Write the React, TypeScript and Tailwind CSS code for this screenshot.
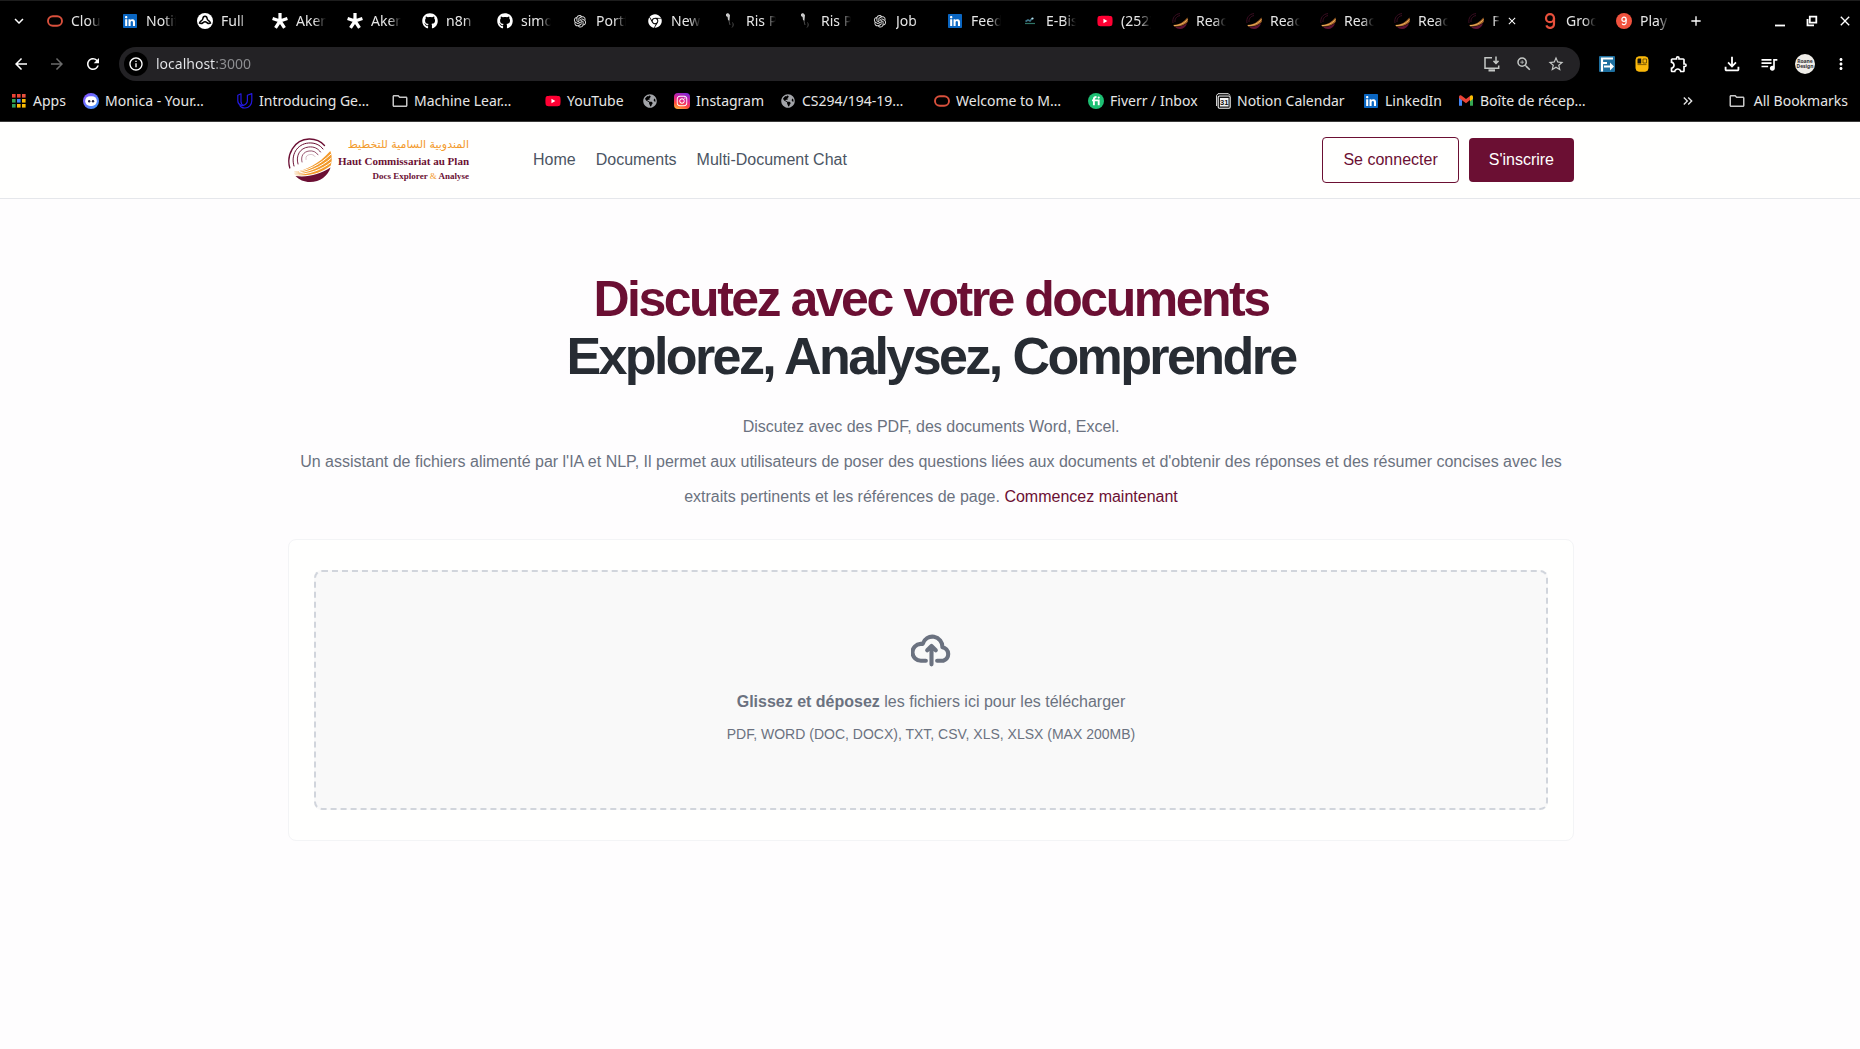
import type { ReactNode } from "react";
import { FaGithub, FaChrome, FaYoutube, FaLinkedin, FaInstagram, FaGlobeAmericas } from "react-icons/fa";
import { AiOutlineOpenAI } from "react-icons/ai";
import {
  MdAdd,
  MdArrowBack,
  MdArrowForward,
  MdClose,
  MdInfoOutline,
  MdKeyboardArrowDown,
  MdMoreVert,
  MdOutlineExtension,
  MdOutlineFileDownload,
  MdOutlineFolder,
  MdQueueMusic,
  MdRefresh,
  MdStarBorder,
  MdZoomIn,
  MdKeyboardDoubleArrowRight,
} from "react-icons/md";

/* ---------- Small brand drawings ---------- */

const Oracle = () => (
  <svg viewBox="0 0 16 16" className="size-4">
    <rect x="1" y="3.2" width="14" height="9.6" rx="4.8" fill="none" stroke="#d9503c" strokeWidth="1.9" />
  </svg>
);

const LinkedIn = () => (
  <span className="relative block size-4">
    <span className="absolute inset-[2px] bg-white" />
    <FaLinkedin className="relative size-4 text-[#0a66c2]" />
  </span>
);

const FullStack = () => (
  <svg viewBox="0 0 16 16" className="size-4">
    <circle cx="8" cy="8" r="8" fill="#fff" />
    <path
      d="M8 3.200c1.200 0 2 1 2.100 2.300.1 1 .6 1.600 1.500 2.200 1 .7 1.700 1.400 1.900 2.500-1.300.7-2.600.3-3.600-.6-.6-.5-1.200-.8-1.900-.8s-1.300.3-1.900.8c-1 .9-2.300 1.300-3.600.6.2-1.100.9-1.800 1.900-2.500.9-.6 1.400-1.200 1.500-2.200C6 4.200 6.800 3.200 8 3.200z"
      fill="none"
      stroke="#000"
      strokeWidth="1.500"
    />
  </svg>
);

const Asterisk = () => (
  <svg viewBox="0 0 16 16" className="size-4" stroke="#fff" strokeWidth="3.2">
    <path d="M8 8V0M8 8L.6 5.600M8 8L15.400 5.600M8 8L3.500 14.800M8 8L12.500 14.800" />
  </svg>
);

const Ris = () => (
  <svg viewBox="0 0 16 16" className="size-4">
    <path d="M4 1l2-1 2 2-.6 6L6 7 5.600 4 4 3z" fill="#c9c9c9" />
    <path d="M7 8l1 4M10.500 9.500c1 1.500 1 3.500-.5 5" stroke="#4b4b4b" fill="none" strokeWidth="1" />
  </svg>
);

const Ebis = () => (
  <svg viewBox="0 0 16 16" className="size-4">
    <path d="M3.500 8.500l2.500-1.500 2 1 2-2.500" stroke="#3f7488" strokeWidth="1.600" fill="none" />
    <path d="M3 10.500h10" stroke="#2f7466" strokeWidth="1.200" />
    <circle cx="10.500" cy="5.500" r="1.100" fill="#b5e2f0" />
  </svg>
);

const ReactDocs = () => (
  <svg viewBox="0 0 16 16" className="size-4">
    <path d="M1 10C0 5 3 1 8 .6M3 9C2.600 6 4.600 3 8 2.600" stroke="#3b0d22" strokeWidth="1" fill="none" />
    <path d="M1 12C7 12 12 9 15.400 4.500c.5 1.500.6 3 .3 4.500C12 12.500 7 14 2.500 13.500z" fill="#a9672a" />
    <path d="M2 12.600C8 12.600 12.500 10 15.500 6.500" stroke="#f0b45f" strokeWidth=".9" fill="none" />
    <path d="M3 13.800C8 14.400 12 12.500 15.200 10C14 14 11 16 8 16c-2 0-3.800-.8-5-2.200z" fill="#5b1233" />
  </svg>
);

const Groq = () => (
  <svg viewBox="0 0 16 16" className="size-4" fill="none" stroke="#e8503c" strokeWidth="2.200">
    <circle cx="8" cy="5.200" r="4" />
    <path d="M12 5v5.800a4 4 0 0 1-7.700 1.600" />
  </svg>
);

const Playground = () => (
  <svg viewBox="0 0 16 16" className="size-4">
    <circle cx="8" cy="8" r="8" fill="#f0523e" />
    <circle cx="8" cy="6.300" r="2.100" fill="none" stroke="#fff" strokeWidth="1.200" />
    <path d="M10.100 6.300v3.200a2.100 2.100 0 0 1-4 .9" fill="none" stroke="#fff" strokeWidth="1.200" />
  </svg>
);

const appColors = ["#ea4335", "#ea4335", "#e8513f", "#34a853", "#4285f4", "#fbbc04", "#2f9e5b", "#fbbc04", "#fbbc04"];
const AppsGrid = () => (
  <svg viewBox="0 0 14 14" className="size-[14px]">
    {appColors.map((c, i) => (
      <rect key={i} x={(i % 3) * 5} y={Math.floor(i / 3) * 5} width="3.600" height="3.600" fill={c} />
    ))}
  </svg>
);

const Monica = () => (
  <svg viewBox="0 0 16 16" className="size-4">
    <defs>
      <linearGradient id="monica" x1="0" x2="1" y1="0" y2="1">
        <stop offset="0" stopColor="#8b4dff" />
        <stop offset="1" stopColor="#3aa0ff" />
      </linearGradient>
    </defs>
    <circle cx="8" cy="8" r="8" fill="url(#monica)" />
    <rect x="2.200" y="3.200" width="11.600" height="9.800" rx="4.800" fill="#fff" />
    <circle cx="6.200" cy="8.300" r="1.200" fill="#1c1c3a" />
    <circle cx="10" cy="8.300" r="1.200" fill="#1c1c3a" />
  </svg>
);

const Udacity = () => (
  <svg viewBox="0 0 16 16" className="size-4" fill="none" stroke="#2418e0" strokeWidth="1.200" strokeLinejoin="round">
    <path d="M.8 2.200L4 .8v7.600c0 2 1 3.200 2.600 3.800-1 .6-1.800.5-2.600.2C2 11.600.8 10 .8 7.800z" />
    <path d="M6.600 12.200c2-.6 3.800-2.200 3.800-5V2.200l4.400-1.600v7.200c0 4-3 7-6.800 7.200-2.600.1-4.400-.8-5.400-2.800" />
  </svg>
);

const Instagram = () => (
  <span className="flex size-4 items-center justify-center rounded bg-[linear-gradient(200deg,#7a2be0_5%,#e1228b_45%,#ff4b3a_70%,#ffc83a_100%)]">
    <FaInstagram className="size-3 text-white" />
  </span>
);

const Fiverr = () => (
  <svg viewBox="0 0 16 16" className="size-4">
    <circle cx="8" cy="8" r="8" fill="#1dbf73" />
    <path d="M4 7.400h6.700v4.800M5.900 12.200V6c0-1.400.8-2 2.600-2" stroke="#fff" strokeWidth="1.900" fill="none" />
    <circle cx="10.700" cy="4.600" r="1.100" fill="#fff" />
  </svg>
);

const Notion = () => (
  <svg viewBox="0 0 16 16" className="size-4">
    <path d="M1.600 13V2.400L3 .7h10.400l1.600 1.700" stroke="#e6e6e6" strokeWidth="1" fill="none" />
    <rect x="3.200" y="3" width="12" height="12.300" rx="1.200" fill="#111" stroke="#f1f1f1" strokeWidth="1.100" />
    <rect x="5" y="5" width="8.500" height="8.500" fill="#f5f5f5" />
    <text x="9.200" y="12" textAnchor="middle" fontSize="7.500" fontWeight="700" fontFamily="Liberation Sans, sans-serif" fill="#111">
      31
    </text>
  </svg>
);

const Gmail = () => (
  <svg viewBox="0 0 16 16" className="size-4">
    <path d="M1 3.500v9.200h3V7z" fill="#4285f4" />
    <path d="M15 3.500v9.200h-3V7z" fill="#34a853" />
    <path d="M12 5v3.200l3-2.300V4c0-1.700-1.800-2.200-3-1z" fill="#fbbc04" />
    <path d="M1 4c0-1.700 1.800-2.200 3-1l4 3.100L12 3v4L8 10.200 1 5z" fill="#ea4335" />
  </svg>
);

const YouTube = () => (
  <span className="relative block size-4">
    <span className="absolute inset-[5px] bg-white" />
    <FaYoutube className="relative size-4 text-[#ff0033]" />
  </span>
);

const Globe = () => <FaGlobeAmericas className="size-[14px] text-[#a2a4a8]" />;

/* ---------- Browser chrome ---------- */

type Tab = { label: string; icon: ReactNode; active?: boolean; narrow?: boolean };

const tabs: Tab[] = [
  { label: "Cloud", icon: <Oracle /> },
  { label: "Notific", icon: <LinkedIn /> },
  { label: "Full", icon: <FullStack /> },
  { label: "Aken", icon: <Asterisk /> },
  { label: "Aken", icon: <Asterisk /> },
  { label: "n8n", icon: <FaGithub className="size-4 text-white" /> },
  { label: "simo", icon: <FaGithub className="size-4 text-white" /> },
  { label: "Portf", icon: <AiOutlineOpenAI className="size-4 text-[#d8d8d8]" /> },
  { label: "New", icon: <FaChrome className="size-[14px] text-white" /> },
  { label: "Ris P", icon: <Ris /> },
  { label: "Ris P", icon: <Ris /> },
  { label: "Job", icon: <AiOutlineOpenAI className="size-4 text-[#d8d8d8]" /> },
  { label: "Feed", icon: <LinkedIn /> },
  { label: "E-Bis", icon: <Ebis /> },
  { label: "(252)", icon: <YouTube /> },
  { label: "React", icon: <ReactDocs />, narrow: true },
  { label: "React", icon: <ReactDocs />, narrow: true },
  { label: "React", icon: <ReactDocs />, narrow: true },
  { label: "React", icon: <ReactDocs />, narrow: true },
  { label: "F", icon: <ReactDocs />, narrow: true, active: true },
  { label: "Groq", icon: <Groq />, narrow: true },
  { label: "Play", icon: <Playground />, narrow: true },
];

const bookmarks: { label: string; icon: ReactNode; width: string }[] = [
  { label: "Apps", icon: <AppsGrid />, width: "w-[72px]" },
  { label: "Monica - Your…", icon: <Monica />, width: "w-[154px]" },
  { label: "Introducing Ge…", icon: <Udacity />, width: "w-[155px]" },
  { label: "Machine Lear…", icon: <MdOutlineFolder className="size-[18px] shrink-0 text-[#c7c7c7]" />, width: "w-[153px]" },
  { label: "YouTube", icon: <YouTube />, width: "w-[97px]" },
  { label: "", icon: <Globe />, width: "w-8" },
  { label: "Instagram", icon: <Instagram />, width: "w-[106px]" },
  { label: "CS294/194-19…", icon: <Globe />, width: "w-[154px]" },
  { label: "Welcome to M…", icon: <Oracle />, width: "w-[154px]" },
  { label: "Fiverr / Inbox", icon: <Fiverr />, width: "w-[127px]" },
  { label: "Notion Calendar", icon: <Notion />, width: "w-[148px]" },
  { label: "LinkedIn", icon: <LinkedIn />, width: "w-[95px]" },
  { label: "Boîte de récep…", icon: <Gmail />, width: "w-[150px]" },
];

function TabStrip() {
  return (
    <div className="flex h-[42px] items-center pb-0.5">
      <button aria-label="Search tabs" className="flex w-[47px] shrink-0 pl-[10px]">
        <MdKeyboardArrowDown className="size-[18px] text-white" />
      </button>
      <div role="tablist" className="flex min-w-0 items-center">
        {tabs.map((t, i) => (
          <div key={i} className={t.narrow ? "flex w-[74px] min-w-0 items-center" : "flex w-[75px] min-w-0 items-center"}>
            <button role="tab" aria-selected={!!t.active} className="flex min-w-0 items-center gap-2">
              <span className="flex w-4 shrink-0 justify-center">{t.icon}</span>
              <span
                className={
                  t.active
                    ? "w-2 overflow-hidden whitespace-nowrap mask-r-from-20% mask-r-to-100%"
                    : "w-[30px] overflow-hidden text-left whitespace-nowrap mask-r-from-60% mask-r-to-100%"
                }
              >
                {t.label}
              </span>
            </button>
            {t.active && (
              <button aria-label="Close tab" className="ml-1.5">
                <MdClose className="size-3 text-white" />
              </button>
            )}
          </div>
        ))}
      </div>
      <button aria-label="New tab" className="-ml-0.5 shrink-0">
        <MdAdd className="size-4 text-white" />
      </button>
      <div className="ml-auto flex items-center gap-[18px] pr-[7px] text-white">
        <button aria-label="Minimize">
          <svg viewBox="0 0 14 14" className="size-[14px]">
            <path d="M2 11.500h10" stroke="currentColor" strokeWidth="1.800" />
          </svg>
        </button>
        <button aria-label="Restore">
          <svg viewBox="0 0 14 14" className="size-[14px]" fill="none" stroke="currentColor" strokeWidth="1.800">
            <path d="M4.800 2.700h6.500v6H4.800zM2.500 5v6.300H9" />
          </svg>
        </button>
        <button aria-label="Close">
          <MdClose className="size-4" />
        </button>
      </div>
    </div>
  );
}

function Toolbar() {
  return (
    <div className="flex h-[42px] items-center">
      <div className="flex w-[119px] shrink-0 items-center gap-[18px] pl-3 text-white">
        <button aria-label="Back">
          <MdArrowBack className="size-[18px]" />
        </button>
        <button aria-label="Forward" className="text-[#6b6b6b]">
          <MdArrowForward className="size-[18px]" />
        </button>
        <button aria-label="Reload">
          <MdRefresh className="size-[18px]" />
        </button>
      </div>
      <div className="flex h-[34px] min-w-0 flex-1 items-center rounded-full bg-[#232225] pr-[15px] pl-[5px] text-[#c4c7c5]">
        <button aria-label="Site information" className="flex size-6 shrink-0 items-center justify-center rounded-full bg-black text-white">
          <MdInfoOutline className="size-4" />
        </button>
        <input
          aria-label="Address"
          defaultValue="localhost:3000"
          className="ml-2 min-w-0 flex-1 bg-[linear-gradient(90deg,#e8eaed_60px,#8f9093_60px)] bg-clip-text text-transparent caret-white outline-none"
        />
        <div className="flex items-center gap-[14px]">
          <button aria-label="Install app">
            <svg viewBox="0 0 18 16" className="h-4 w-[18px]" fill="none" stroke="currentColor" strokeWidth="1.500">
              <path d="M9 1.700H2v10.500h13.700V9.500M13 .5v6.700M10.500 4.900L13 7.400l2.500-2.500" />
              <path d="M5.500 14.400h6.500" strokeWidth="2.200" />
            </svg>
          </button>
          <button aria-label="Zoom">
            <MdZoomIn className="size-[18px]" />
          </button>
          <button aria-label="Bookmark this page">
            <MdStarBorder className="size-[18px]" />
          </button>
        </div>
      </div>
      <div className="flex shrink-0 items-center pr-[10px] pl-[19px] text-white">
        <button aria-label="Share extension">
          <svg viewBox="0 0 16 16" className="size-4">
            <rect width="16" height="16" rx="1" fill="#1d6f9f" />
            <path d="M3 15.500V2.500h11M3 7h5" stroke="#fff" strokeWidth="2.200" fill="none" />
            <path d="M5 9.500h6V6.600l4 4-4 4v-3H5z" fill="#fff" />
          </svg>
        </button>
        <button aria-label="Clicker extension" className="ml-5">
          <svg viewBox="0 0 14 16" className="h-4 w-[14px]">
            <rect x="1" y=".8" width="12" height="14.400" rx="3" fill="#fbb90b" stroke="#fbb90b" />
            <path d="M2.500 3.800c0-.8.500-1.300 1.300-1.300h2.400v5H2.500z" fill="#141414" />
            <path d="M8 3h3.500v4H8z" fill="#fbb90b" stroke="#5b4200" strokeWidth=".8" />
            <path d="M2.500 8.600h9" stroke="#8a6100" strokeWidth="1" />
          </svg>
        </button>
        <button aria-label="Extensions" className="ml-5">
          <MdOutlineExtension className="size-5" />
        </button>
        <button aria-label="Downloads" className="ml-8">
          <MdOutlineFileDownload className="size-[22px]" />
        </button>
        <button aria-label="Media controls" className="ml-4">
          <MdQueueMusic className="size-5" />
        </button>
        <button
          aria-label="Profile"
          className="ml-4 flex size-5 flex-col items-center justify-center rounded-full bg-[#efede8] text-[5px] leading-[5px] font-bold text-[#333]"
        >
          <span>Roane</span>
          <span>Design</span>
        </button>
        <button aria-label="Menu" className="ml-[17px]">
          <MdMoreVert className="size-[18px]" />
        </button>
      </div>
    </div>
  );
}

function BookmarksBar() {
  return (
    <nav aria-label="Bookmarks" className="flex h-8 items-center pr-3 pl-[11px]">
      {bookmarks.map((b, i) => (
        <a key={i} href="#" aria-label={b.label || "Bookmark"} className={`flex min-w-0 items-center gap-1.5 whitespace-nowrap ${b.width}`}>
          <span className="flex w-4 shrink-0 justify-center">{b.icon}</span>
          {b.label && <span>{b.label}</span>}
        </a>
      ))}
      <div className="ml-auto flex shrink-0 items-center">
        <button aria-label="More bookmarks">
          <MdKeyboardDoubleArrowRight className="size-4" />
        </button>
        <a href="#" className="ml-8 flex items-center gap-2 whitespace-nowrap">
          <MdOutlineFolder className="size-[18px] text-[#c7c7c7]" />
          <span>All Bookmarks</span>
        </a>
      </div>
    </nav>
  );
}

/* ---------- Page ---------- */

function Logo() {
  return (
    <a href="#" className="flex w-[181px] items-center justify-between">
      <svg viewBox="0 0 44 44" className="size-11 shrink-0">
        <g fill="none" stroke="#6b0f33" strokeLinecap="round">
          <path d="M1.800 30C-2 17 6 1.500 21 1c7-.2 12 2.500 15.500 6.500" strokeWidth="1.300" />
          <path d="M6 28C2.500 17 9 6 20.500 5c6.500-.5 11.500 2 14.500 6" strokeWidth="1" />
          <path d="M10 26C7.500 17.500 12 10 20.500 9c5.500-.6 9.500 1.400 12 5" strokeWidth=".9" />
          <path d="M14 24c-1.500-6 1.500-10.200 7-11 4-.5 7 .8 9 3.800" strokeWidth=".7" />
          <path d="M18 21.500c-.6-3 1-4.600 4-5 2.200-.3 4 .5 5 2" strokeWidth=".5" opacity=".5" />
        </g>
        <path d="M5.500 34C17 33 31 26 42.300 13c1.600 4 2.100 9 .5 14.500C33 35.500 20 38.500 7 37z" fill="#f39a2b" />
        <g fill="none" stroke="#fff" strokeWidth="1">
          <path d="M5 34.600C20 33 32 26.500 43 16" />
          <path d="M5 35.400C20 35 33 29 43.500 20" />
          <path d="M6 36.300C21 36.800 34 31.500 43.500 24" />
        </g>
        <path d="M7.500 38C20 39.500 32 36.500 42.600 29.500C40 38 32 44 22 44c-6 0-11-2.300-14.500-6z" fill="#6b0f33" />
      </svg>
      <span className="flex flex-col items-end whitespace-nowrap">
        <span dir="rtl" lang="ar" className="font-['DejaVu_Sans','Noto_Sans',sans-serif] text-[11px] leading-4 text-[#f39a2b]">
          المندوبية السامية للتخطيط
        </span>
        <span className="font-['Liberation_Serif',serif] text-[11px] leading-4 font-bold text-[#6b0f33]">Haut Commissariat au Plan</span>
        <span className="font-['Liberation_Serif',serif] text-[9px] leading-[14px] font-bold text-[#6b0f33]">
          Docs Explorer <span className="font-normal text-[#f39a2b]">&amp;</span> Analyse
        </span>
      </span>
    </a>
  );
}

const UploadCloud = () => (
  <svg
    viewBox="0 0 40 40"
    className="size-[41px] text-[#6b7280]"
    fill="none"
    stroke="currentColor"
    strokeWidth="4"
    strokeLinecap="round"
    strokeLinejoin="round"
  >
    <path d="M14.500 31H10a8 8 0 0 1-.6-16.500h2a9.800 9.800 0 0 1 19.200 3.300A6.800 6.800 0 0 1 31.500 31h-6" />
    <path d="M20 34.500V17.500M15.800 20.700L20 16.500l4.200 4.200" />
  </svg>
);

export default function App() {
  return (
    <div className="flex min-h-screen flex-col bg-[#fefdfe] font-['Liberation_Sans',Arial,sans-serif]">
      <div className="border-t border-b border-t-[#1d1d1d] border-b-[#3a3a3a] bg-black pb-1 font-['Noto_Sans',sans-serif] text-sm text-[#e6e6e6]">
        <TabStrip />
        <Toolbar />
        <BookmarksBar />
      </div>

      <header className="border-b border-gray-200 bg-[#fffffe]">
        <div className="mx-auto flex h-[76px] w-full max-w-[1288px] items-center pl-0.5">
          <Logo />
          <nav className="ml-16 flex gap-5 text-base text-[#4b5563]">
            <a href="#">Home</a>
            <a href="#">Documents</a>
            <a href="#">Multi-Document Chat</a>
          </nav>
          <div className="ml-auto flex items-center gap-[10px]">
            <button className="rounded border border-[#6b0f33] px-5 py-[10px] text-base text-[#6b0f33]">Se connecter</button>
            <button className="rounded bg-[#6b0f33] px-5 py-[10px] text-base text-white">S'inscrire</button>
          </div>
        </div>
      </header>

      <main className="mx-auto w-full max-w-[1288px] pt-[72px] pl-0.5 text-center text-[#6b7280]">
        <h1 className="leading-[57px] font-bold">
          <span className="block text-[50px] tracking-tighter text-[#6b0f33]">Discutez avec votre documents</span>
          <span className="block text-[52px] tracking-tighter text-[#272c33]">Explorez, Analysez, Comprendre</span>
        </h1>
        <p className="mt-6 text-base leading-[35px]">
          Discutez avec des PDF, des documents Word, Excel.
          <br />
          Un assistant de fichiers alimenté par l'IA et NLP, Il permet aux utilisateurs de poser des questions liées aux documents et
          d'obtenir des réponses et des résumer concises avec les extraits pertinents et les références de page.{" "}
          <a href="#" className="text-[#6b0f33]">
            Commencez maintenant
          </a>
        </p>
        <section className="mt-[25px] rounded-lg border border-gray-100 bg-[#fffffe] px-[25px] py-[30px]">
          <label className="flex h-60 cursor-pointer flex-col items-center rounded-lg border-2 border-dashed border-gray-300 bg-[#f9f9f9] pt-[57px]">
            <UploadCloud />
            <span className="mt-5 text-base">
              <b>Glissez et déposez</b> les fichiers ici pour les télécharger
            </span>
            <span className="mt-[10px] text-sm">PDF, WORD (DOC, DOCX), TXT, CSV, XLS, XLSX (MAX 200MB)</span>
            <input type="file" className="sr-only" />
          </label>
        </section>
      </main>
    </div>
  );
}
